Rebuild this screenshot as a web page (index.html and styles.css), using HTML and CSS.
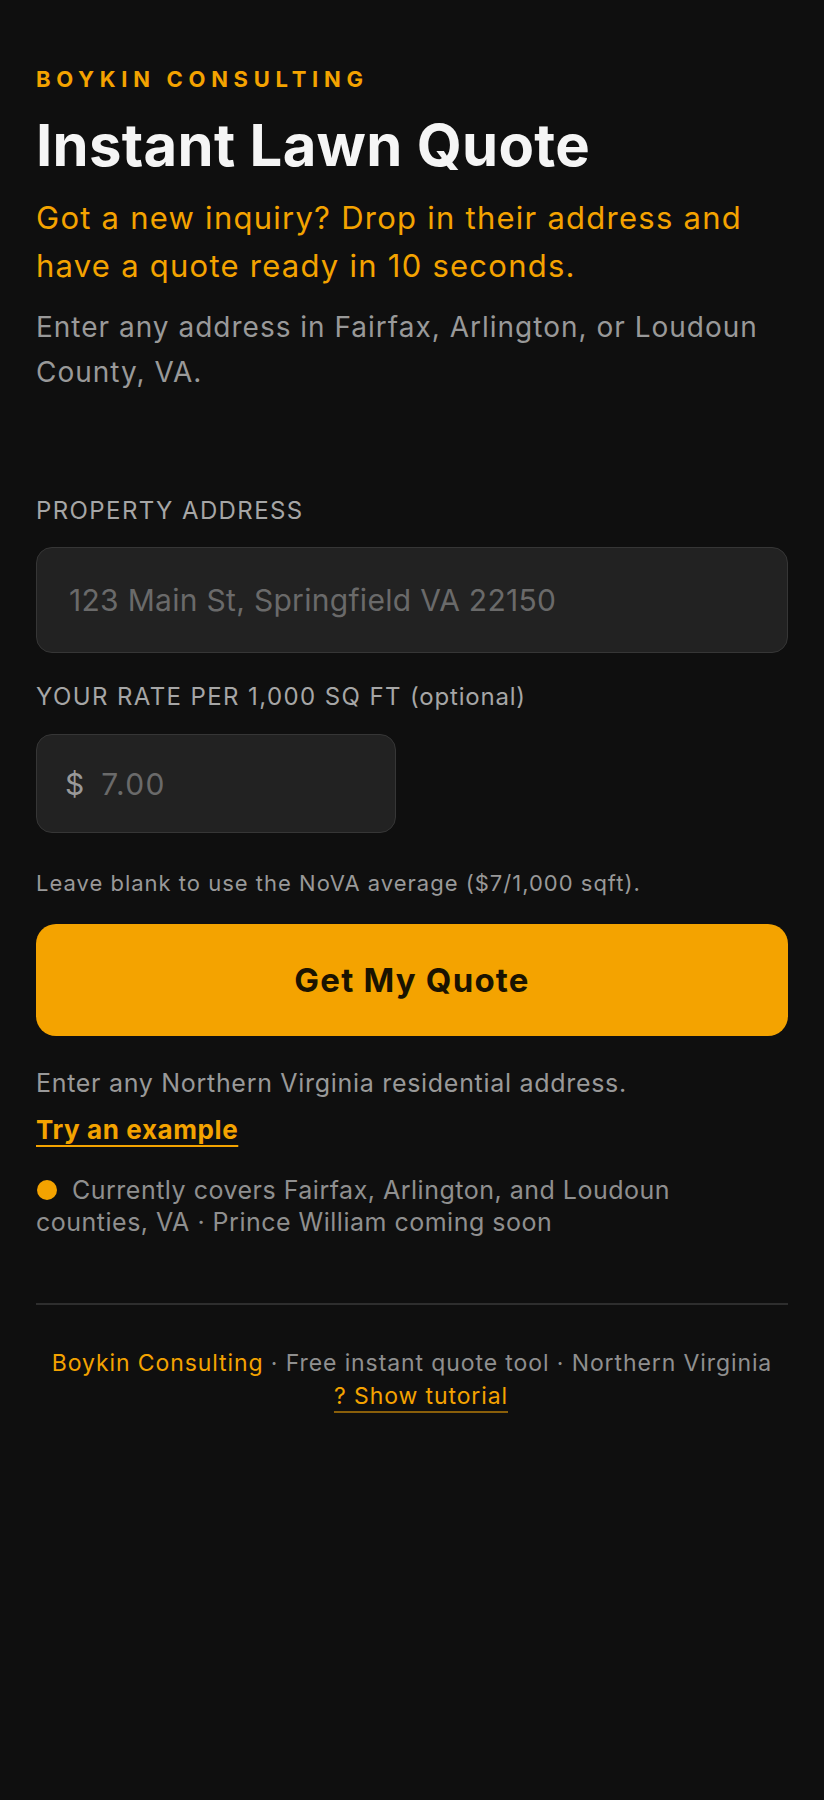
FILE: index.html
```
<!DOCTYPE html>
<html lang="en">
<head>
    <meta charset="UTF-8">
    <meta name="viewport" content="width=device-width, initial-scale=1.0">
    <title>Instant Lawn Quote - Boykin Consulting</title>
    <link rel="stylesheet" href="styles.css">
</head>
<body>
    <div class="page">
        <div class="brand">BOYKIN CONSULTING</div>
        <h1 class="title">Instant Lawn Quote</h1>
        <p class="tagline">Got a new inquiry? Drop in their address and have a quote ready in 10 seconds.</p>
        <p class="sub">Enter any address in Fairfax, Arlington, or Loudoun County, VA.</p>

        <form class="quote-form" onsubmit="return false;">
            <label class="label label-first" for="address">PROPERTY ADDRESS</label>
            <input class="field" id="address" type="text" placeholder="123 Main St, Springfield VA 22150">

            <label class="label" for="rate">YOUR RATE PER 1,000 SQ FT <span class="optional">(optional)</span></label>
            <div class="rate-box">
                <span class="dollar">$</span>
                <input class="rate-input" id="rate" type="text" placeholder="7.00">
            </div>
            <p class="hint">Leave blank to use the NoVA average ($7/1,000 sqft).</p>

            <button class="button" type="submit">Get My Quote</button>
        </form>

        <p class="note">Enter any Northern Virginia residential address.</p>
        <a class="example" href="#">Try an example</a>
        <p class="coverage"><span class="dot"></span>Currently covers Fairfax, Arlington, and Loudoun counties, VA · Prince William coming soon</p>

        <div class="footer">
            <span class="footer-brand">Boykin Consulting</span> · Free instant quote tool · Northern Virginia<br>
            <a class="tutorial" href="#">? Show tutorial</a>
        </div>
    </div>
</body>
</html>
```

FILE: styles.css
```
body {
    margin: 0;
    background-color: #0f0f0f;
    color: #f5f5f5;
    font-family: Inter, "Noto Sans", sans-serif;
}
.page {
    padding: 65px 36px 200px;
}
p {
    margin: 0;
}
.brand {
    font-size: 22px;
    line-height: 28px;
    font-weight: 700;
    letter-spacing: 5.7px;
    color: #f4a300;
}
.title {
    margin: 20px 0 0;
    font-size: 58px;
    line-height: 64px;
    font-weight: 700;
    letter-spacing: 0.3px;
    color: #f5f5f5;
}
.tagline {
    margin-top: 17px;
    font-size: 31px;
    line-height: 48px;
    letter-spacing: 1.25px;
    color: #f4a300;
}
.sub {
    margin-top: 15px;
    font-size: 28px;
    line-height: 45px;
    letter-spacing: 1px;
    color: #999;
}
.quote-form {
    display: flex;
    flex-direction: column;
}
.label {
    margin-top: 29px;
    font-size: 24px;
    line-height: 30px;
    letter-spacing: 1.4px;
    color: #a6a6a6;
}
.label-first {
    margin-top: 101px;
}
.optional {
    letter-spacing: 0.8px;
}
.field {
    box-sizing: border-box;
    margin-top: 21px;
    width: 100%;
    height: 106px;
    padding: 0 32px;
    background-color: #222;
    border: 1.5px solid #363636;
    border-radius: 16px;
    font-family: inherit;
    font-size: 30px;
    letter-spacing: 0.3px;
    color: #f5f5f5;
    outline: none;
}
.field::placeholder,
.rate-input::placeholder {
    color: #6a6a6a;
}
.rate-box {
    box-sizing: border-box;
    margin-top: 22px;
    width: 360px;
    height: 99px;
    display: flex;
    align-items: center;
    gap: 17px;
    padding: 0 28px;
    background-color: #222;
    border: 1.5px solid #363636;
    border-radius: 16px;
}
.dollar {
    font-size: 30px;
    color: #999;
}
.rate-input {
    flex: 1;
    min-width: 0;
    padding: 0;
    background: none;
    border: none;
    font-family: inherit;
    font-size: 30px;
    letter-spacing: 1.4px;
    color: #f5f5f5;
    outline: none;
}
.hint {
    margin-top: 36px;
    font-size: 22px;
    line-height: 28px;
    letter-spacing: 1px;
    color: #999;
}
.button {
    margin-top: 27px;
    width: 100%;
    height: 112px;
    background-color: #f4a300;
    color: #1a1300;
    border: none;
    border-radius: 20px;
    font-family: inherit;
    font-size: 33px;
    font-weight: 700;
    letter-spacing: 1.2px;
    cursor: pointer;
}
.note {
    margin-top: 31px;
    font-size: 25px;
    line-height: 32px;
    letter-spacing: 0.7px;
    color: #999;
}
.example {
    display: inline-block;
    align-self: flex-start;
    margin-top: 15px;
    font-size: 26px;
    line-height: 32px;
    font-weight: 700;
    letter-spacing: 0.6px;
    color: #f4a300;
    text-decoration: underline;
    text-decoration-thickness: 2px;
    text-underline-offset: 6px;
}
.coverage {
    margin-top: 28px;
    max-width: 690px;
    font-size: 25px;
    line-height: 32px;
    letter-spacing: 0.5px;
    color: #8f8f8f;
}
.dot {
    display: inline-block;
    width: 20px;
    height: 20px;
    margin: 0 15px 0 1px;
    border-radius: 50%;
    background-color: #f4a300;
    vertical-align: -1px;
}
.footer {
    margin-top: 65px;
    padding-top: 42px;
    border-top: 2px solid #2e2e2e;
    text-align: center;
    font-size: 23px;
    line-height: 33px;
    letter-spacing: 0.9px;
    color: #8f8f8f;
}
.footer-brand {
    color: #f4a300;
}
.tutorial {
    display: inline-block;
    margin-left: 18px;
    color: #f4a300;
    text-decoration: underline;
    text-decoration-color: #8a5f0a;
    text-decoration-thickness: 2px;
    text-underline-offset: 7px;
}
```
